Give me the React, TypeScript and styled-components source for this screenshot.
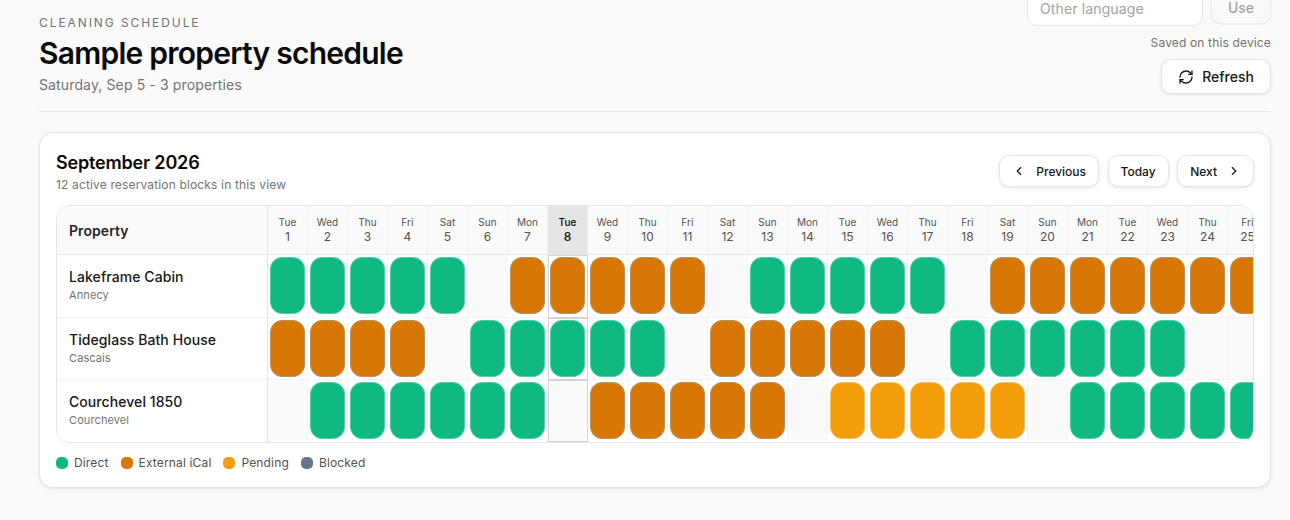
import React from 'react';
import styled, { createGlobalStyle } from 'styled-components';
import { ChevronLeft, ChevronRight, RefreshCw } from 'lucide-react';

type Kind = 'direct' | 'ical' | 'pending' | 'none';

const COLORS: Record<string, string> = {
  direct: '#10b981',
  ical: '#d97706',
  pending: '#f59e0b',
  blocked: '#64748b',
};

const EDGES: Record<string, string> = {
  direct: '#4fd0a8',
  ical: '#b8935f',
  pending: '#f3c063',
};

const GlobalStyle = createGlobalStyle`
  html, body {
    margin: 0;
    height: 100%;
    overflow: hidden;
    background: #fafafa;
    font-family: Inter, "Liberation Sans", sans-serif;
    color: #0a0a0a;
  }
`;

const Page = styled.div`
  margin-top: -10px;
  padding: 0 19px 0 39px;
`;

const Header = styled.header`
  display: flex;
  justify-content: space-between;
  align-items: flex-end;
  padding-bottom: 16px;
  border-bottom: 1px solid #e5e5e5;
`;

const Eyebrow = styled.div`
  font-size: 12px;
  line-height: 16px;
  letter-spacing: 0.16em;
  color: #737373;
`;

const Title = styled.h1`
  margin: 4px 0;
  font-size: 30px;
  line-height: 36px;
  font-weight: 600;
  letter-spacing: -0.025em;
`;

const Subtitle = styled.div`
  font-size: 14px;
  line-height: 20px;
  letter-spacing: 0.13px;
  color: #737373;
`;

const Controls = styled.div`
  display: flex;
  flex-direction: column;
  align-items: flex-end;
`;

const LanguageRow = styled.div`
  display: flex;
  align-items: flex-start;
  gap: 8px;
`;

const LanguageInput = styled.div`
  box-sizing: border-box;
  width: 176px;
  height: 36px;
  padding: 0 12px;
  display: flex;
  align-items: center;
  background: #fff;
  border: 1px solid #e5e5e5;
  border-radius: 10px;
  font-size: 14px;
  letter-spacing: 0.13px;
  color: #a3a3a3;
`;

const UseButton = styled.div`
  box-sizing: border-box;
  width: 60px;
  height: 34px;
  display: flex;
  align-items: center;
  justify-content: center;
  background: #fafafa;
  border: 1px solid #eeeeee;
  border-radius: 10px;
  box-shadow: 0 1px 2px rgba(0, 0, 0, 0.05);
  font-size: 14px;
  font-weight: 500;
  color: #a3a3a3;
`;

const Saved = styled.div`
  margin-top: 9px;
  font-size: 12px;
  line-height: 16px;
  letter-spacing: 0.15px;
  color: #737373;
`;

const Button = styled.button<{ $large?: boolean }>`
  box-sizing: border-box;
  display: flex;
  align-items: center;
  justify-content: center;
  gap: ${(p) => (p.$large ? 8 : 10)}px;
  height: ${(p) => (p.$large ? 35 : 32)}px;
  padding: 0 ${(p) => (p.$large ? 16 : 12)}px;
  background: #fff;
  border: 1px solid #e5e5e5;
  border-radius: 10px;
  box-shadow: 0 1px 3px rgba(0, 0, 0, 0.1);
  font-family: inherit;
  font-size: ${(p) => (p.$large ? 14 : 12)}px;
  font-weight: 500;
  color: #171717;
`;

const RefreshButton = styled(Button)`
  margin: 8px 0 1px;
  width: 110px;
`;

const Card = styled.section`
  box-sizing: border-box;
  margin-top: 20px;
  height: 356px;
  padding: 16px 16px 0;
  background: #fff;
  border: 1px solid #e5e5e5;
  border-radius: 14px;
  box-shadow: 0 1px 3px rgba(0, 0, 0, 0.1);
`;

const CardTop = styled.div`
  display: flex;
  justify-content: space-between;
  align-items: center;
  margin-bottom: 12px;
`;

const CardHeading = styled.div`
  padding-top: 2px;
`;

const CardTitle = styled.h2`
  margin: 0;
  font-size: 18px;
  line-height: 24px;
  font-weight: 600;
  letter-spacing: -0.01em;
`;

const CardSub = styled.div`
  margin-top: 2px;
  font-size: 12px;
  line-height: 16px;
  letter-spacing: 0.15px;
  color: #737373;
`;

const Nav = styled.div`
  display: flex;
  gap: 8.5px;
`;

const Table = styled.div`
  box-sizing: border-box;
  height: 238px;
  border: 1px solid #e5e5e5;
  border-radius: 14px;
  overflow: hidden;
`;

const Grid = styled.div`
  display: grid;
  grid-template-columns: 211px repeat(25, 40px);
  grid-template-rows: 49px 63px 62px 62px;
`;

const CornerCell = styled.div`
  display: flex;
  align-items: center;
  padding-left: 12px;
  background: #fafafa;
  border-right: 1px solid #e5e5e5;
  border-bottom: 1px solid #e5e5e5;
  font-size: 14px;
  font-weight: 600;
  letter-spacing: 0.07px;
  color: #262626;
`;

const DayCell = styled.div<{ $today?: boolean }>`
  box-sizing: border-box;
  display: flex;
  flex-direction: column;
  align-items: center;
  justify-content: center;
  background: ${(p) => (p.$today ? '#e5e5e5' : '#fafafa')};
  border-right: 1px solid #efefef;
  border-bottom: 1px solid #e5e5e5;
  color: ${(p) => (p.$today ? '#0a0a0a' : '#525252')};
  font-weight: ${(p) => (p.$today ? 500 : 400)};
`;

const DayName = styled.div`
  font-size: 10px;
  line-height: 14px;
  letter-spacing: 0.1px;
`;

const DayNum = styled.div`
  font-size: 12px;
  line-height: 16px;
`;

const PropertyCell = styled.div<{ $last?: boolean }>`
  display: flex;
  flex-direction: column;
  justify-content: center;
  padding: 0 0 2px 12px;
  background: #fff;
  border-right: 1px solid #e5e5e5;
  border-bottom: ${(p) => (p.$last ? 'none' : '1px solid #f2f2f2')};
`;

const PropertyName = styled.div`
  font-size: 14px;
  line-height: 20px;
  font-weight: 500;
  letter-spacing: 0.07px;
  color: #171717;
`;

const PropertyCity = styled.div`
  font-size: 11px;
  line-height: 16px;
  letter-spacing: 0.1px;
  color: #737373;
`;

const SlotCell = styled.div<{ $today?: boolean; $empty?: boolean; $last?: boolean }>`
  box-sizing: border-box;
  display: flex;
  align-items: center;
  justify-content: center;
  padding-bottom: 1px;
  background: ${(p) => (p.$empty ? '#fafafa' : '#fff')};
  border-right: 1px solid #f5f5f5;
  border-bottom: ${(p) => (p.$last ? 'none' : '1px solid #f2f2f2')};
  outline: ${(p) => (p.$today ? '1px solid #d4d4d4' : 'none')};
  outline-offset: -1px;
`;

const Block = styled.div<{ $kind: string }>`
  box-sizing: border-box;
  width: 35px;
  height: 57px;
  background: ${(p) => COLORS[p.$kind]};
  border: 1px solid ${(p) => EDGES[p.$kind]};
  border-radius: 12px;
`;

const Legend = styled.div`
  display: flex;
  gap: 12px;
  margin-top: 12px;
`;

const LegendItem = styled.div`
  display: flex;
  align-items: center;
  gap: 6px;
  font-size: 12px;
  line-height: 16px;
  letter-spacing: 0.15px;
  color: #525252;
`;

const Dot = styled.span<{ $kind: string }>`
  width: 12px;
  height: 12px;
  border-radius: 5px;
  background: ${(p) => COLORS[p.$kind]};
`;

const WEEK = ['Sun', 'Mon', 'Tue', 'Wed', 'Thu', 'Fri', 'Sat'];
const days = Array.from({ length: 25 }, (_, i) => ({
  num: i + 1,
  name: WEEK[(i + 2) % 7],
}));

const expand = (runs: [Kind, number][]) =>
  runs.flatMap(([kind, count]) => Array<Kind>(count).fill(kind));

const properties = [
  {
    name: 'Lakeframe Cabin',
    city: 'Annecy',
    slots: expand([
      ['direct', 5], ['none', 1], ['ical', 5], ['none', 1],
      ['direct', 5], ['none', 1], ['ical', 7],
    ]),
  },
  {
    name: 'Tideglass Bath House',
    city: 'Cascais',
    slots: expand([
      ['ical', 4], ['none', 1], ['direct', 5], ['none', 1],
      ['ical', 5], ['none', 1], ['direct', 6], ['none', 2],
    ]),
  },
  {
    name: 'Courchevel 1850',
    city: 'Courchevel',
    slots: expand([
      ['none', 1], ['direct', 6], ['none', 1], ['ical', 5], ['none', 1],
      ['pending', 5], ['none', 1], ['direct', 5],
    ]),
  },
];

const legend = [
  { kind: 'direct', label: 'Direct' },
  { kind: 'ical', label: 'External iCal' },
  { kind: 'pending', label: 'Pending' },
  { kind: 'blocked', label: 'Blocked' },
];

function App() {
  return (
    <Page>
      <GlobalStyle />
      <Header>
        <div>
          <Eyebrow>CLEANING SCHEDULE</Eyebrow>
          <Title>Sample property schedule</Title>
          <Subtitle>Saturday, Sep 5 - 3 properties</Subtitle>
        </div>
        <Controls>
          <LanguageRow>
            <LanguageInput>Other language</LanguageInput>
            <UseButton>Use</UseButton>
          </LanguageRow>
          <Saved>Saved on this device</Saved>
          <RefreshButton $large>
            <RefreshCw size={16} />
            Refresh
          </RefreshButton>
        </Controls>
      </Header>
      <Card>
        <CardTop>
          <CardHeading>
            <CardTitle>September 2026</CardTitle>
            <CardSub>12 active reservation blocks in this view</CardSub>
          </CardHeading>
          <Nav>
            <Button>
              <ChevronLeft size={14} />
              Previous
            </Button>
            <Button>Today</Button>
            <Button>
              Next
              <ChevronRight size={14} />
            </Button>
          </Nav>
        </CardTop>
        <Table>
          <Grid>
            <CornerCell>Property</CornerCell>
            {days.map((d) => (
              <DayCell key={d.num} $today={d.num === 8}>
                <DayName>{d.name}</DayName>
                <DayNum>{d.num}</DayNum>
              </DayCell>
            ))}
            {properties.map((p, r) => (
              <React.Fragment key={p.name}>
                <PropertyCell $last={r === 2}>
                  <PropertyName>{p.name}</PropertyName>
                  <PropertyCity>{p.city}</PropertyCity>
                </PropertyCell>
                {p.slots.map((kind, i) => (
                  <SlotCell key={i} $today={i === 7} $empty={kind === 'none'} $last={r === 2}>
                    {kind !== 'none' && <Block $kind={kind} />}
                  </SlotCell>
                ))}
              </React.Fragment>
            ))}
          </Grid>
        </Table>
        <Legend>
          {legend.map((l) => (
            <LegendItem key={l.kind}>
              <Dot $kind={l.kind} />
              {l.label}
            </LegendItem>
          ))}
        </Legend>
      </Card>
    </Page>
  );
}

export default App;
